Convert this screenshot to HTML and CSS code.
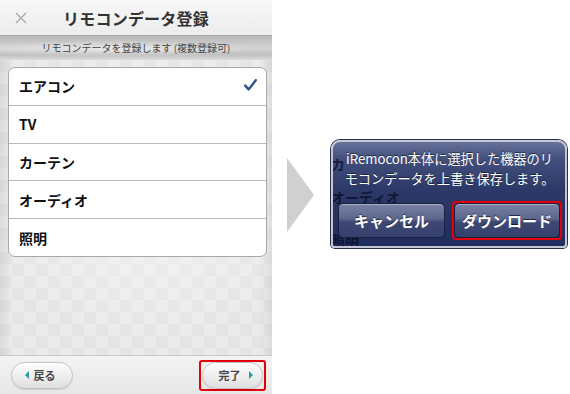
FILE: index.html
```html
<!DOCTYPE html>
<html lang="ja">
<head>
<meta charset="utf-8">
<link rel="stylesheet" href="styles.css">
</head>
<body>
<div class="page">
  <div class="phone">
    <div class="header">
      <div class="close">
        <svg width="12" height="12" viewBox="0 0 12 12"><path d="M1 1 L11 11 M11 1 L1 11" stroke="#a4a4a4" stroke-width="1.2" fill="none"/></svg>
      </div>
      <div class="title">リモコンデータ登録</div>
      <div></div>
    </div>
    <div class="subbar">リモコンデータを登録します (複数登録可)</div>
    <div class="content">
      <ul class="list">
        <li class="row">エアコン
          <svg class="check" width="13" height="12" viewBox="0 0 13 12"><path d="M1.2 6.6 L4.6 10.4 L11.8 1.2" stroke="#34548f" stroke-width="2.4" fill="none" stroke-linecap="round" stroke-linejoin="round"/></svg>
        </li>
        <li class="row">TV</li>
        <li class="row">カーテン</li>
        <li class="row">オーディオ</li>
        <li class="row">照明</li>
      </ul>
    </div>
    <div class="footer">
      <button class="pill back"><span class="tri tri-left"></span>戻る</button>
      <div class="redmark small">
        <button class="pill done">完了<span class="tri tri-right"></span></button>
      </div>
    </div>
  </div>
  <div class="arrow"></div>
  <div class="alert">
    <span class="ghost g1">カ</span>
    <span class="ghost g2">オーディオ</span>
    <span class="ghost g3">照明</span>
    <p class="msg">iRemocon本体に選択した機器のリ<br>モコンデータを上書き保存します。</p>
    <div class="alert-buttons">
      <button class="abtn cancel">キャンセル</button>
      <div class="redmark big">
        <button class="abtn">ダウンロード</button>
      </div>
    </div>
  </div>
</div>
</body>
</html>
```

FILE: styles.css
```css
* { box-sizing: border-box; }
html, body { margin: 0; padding: 0; background: #fff; }
body {
  font-family: "Noto Sans CJK JP", "Noto Sans", sans-serif;
  width: 570px;
  height: 394px;
  overflow: hidden;
}
.page {
  display: flex;
  align-items: flex-start;
  height: 394px;
}

/* phone screen */
.phone {
  width: 272px;
  height: 394px;
  display: flex;
  flex-direction: column;
  background: #e9e9e9;
}
.header {
  height: 36px;
  display: grid;
  grid-template-columns: 1fr auto 1fr;
  align-items: center;
  background: linear-gradient(#f8f8f8, #ececec);
  border-bottom: 1px solid #a9a9a9;
}
.close { padding-left: 15px; display: flex; align-items: center; padding-top: 1px; }
.title {
  font-size: 16px;
  font-weight: 700;
  color: #333;
  letter-spacing: 0.2px;
  padding-top: 1px;
}
.subbar {
  height: 24px;
  display: flex;
  align-items: center;
  justify-content: center;
  font-size: 10px;
  color: #444;
  background:
    radial-gradient(ellipse 55% 35% at 40% 55%, rgba(255,255,255,0.5), rgba(255,255,255,0) 100%),
    linear-gradient(#b7b7b7 0%, #cbcbcb 35%, #d3d3d3 55%, #c0c0c0 80%, #d6d6d6 100%);
  border-bottom: 1px solid #d9d9d9;
}
.content {
  flex: 1;
  padding: 7px 5px 0 8px;
  background:
    linear-gradient(90deg, rgba(0,0,0,0.07), rgba(0,0,0,0) 12px, rgba(0,0,0,0) 258px, rgba(0,0,0,0.06)),
    radial-gradient(ellipse 60% 50% at 55% 45%, rgba(255,255,255,0.5), rgba(255,255,255,0)),
    repeating-conic-gradient(#ebebeb 0 25%, #e5e5e5 0 50%) 0 0 / 24px 24px;
}
.list {
  list-style: none;
  margin: 0;
  padding: 0;
  height: 190px;
  background: #fff;
  border: 1px solid #a8a8a8;
  border-radius: 7px;
  display: flex;
  flex-direction: column;
  overflow: hidden;
}
.row {
  flex: 1;
  display: flex;
  align-items: center;
  justify-content: space-between;
  padding: 0 9px 0 10px;
  font-size: 14px;
  font-weight: 700;
  color: #111;
  border-bottom: 1px solid #b9b9b9;
}
.row:last-child { border-bottom: none; }
.check { margin-top: -2px; }

.footer {
  height: 39px;
  display: flex;
  align-items: center;
  justify-content: space-between;
  padding: 0 6px 0 11px;
  background: linear-gradient(#f3f3f3, #e7e7e7);
  border-top: 1px solid #c9c9c9;
}
.pill {
  height: 27px;
  border-radius: 14px;
  border: 1px solid #c2c2c2;
  background: linear-gradient(#fdfdfd, #ececec 60%, #dedede);
  box-shadow: 0 1px 1px rgba(0,0,0,0.12), inset 0 1px 0 #fff;
  font-family: inherit;
  font-size: 11px;
  font-weight: 700;
  color: #444;
  display: flex;
  align-items: center;
  justify-content: center;
  padding: 0;
}
.back { width: 62px; gap: 5px; padding-right: 4px; }
.done { width: 61px; gap: 8px; padding-left: 6px; }
.tri { width: 0; height: 0; border-top: 4px solid transparent; border-bottom: 4px solid transparent; }
.tri-left { border-right: 4px solid #2b9aa8; }
.tri-right { border-left: 4px solid #2b9aa8; }

.redmark {
  border: 2px solid #e4000b;
  border-radius: 3px;
}
.redmark.small { padding: 0 1px; height: 31px; display: flex; align-items: center; }

/* arrow */
.arrow {
  width: 27px;
  height: 74px;
  margin: 158px 0 0 15px;
  background: #d0d0d0;
  clip-path: polygon(0 0, 100% 50%, 0 100%);
}

/* alert */
.alert {
  position: relative;
  width: 236px;
  height: 108px;
  margin: 140px 0 0 17px;
  border: 2px solid #c3c7d3;
  border-radius: 9px 9px 4px 4px;
  overflow: hidden;
  background:
    linear-gradient(#67729a 0%, #43507d 16%, #2d3a69 45%, #263363 70%, #212d5c 100%);
  box-shadow: 0 0 0 1px #27304f;
  padding: 7px 3px 0 4px;
}
.ghost {
  position: absolute;
  left: -2px;
  font-size: 14px;
  font-weight: 700;
  color: rgba(6, 10, 32, 0.72);
}
.g1 { top: 12px; }
.g2 { top: 45px; }
.g3 { top: 88px; }
.msg {
  position: relative;
  margin: 0;
  text-align: center;
  color: #fff;
  font-size: 13.2px;
  line-height: 20px;
  text-shadow: 0 -1px 0 rgba(0,0,0,0.5);
}
.alert-buttons {
  position: relative;
  display: flex;
  align-items: center;
  justify-content: space-between;
  margin-top: 12px;
}
.abtn {
  width: 107px;
  height: 35px;
  border: 1px solid #18203d;
  border-radius: 5px;
  background: linear-gradient(#7a83a5 0%, #5c668c 45%, #3d4875 55%, #35406d 100%);
  box-shadow: inset 0 1px 0 rgba(255,255,255,0.35);
  color: #fff;
  font-family: inherit;
  font-size: 15px;
  font-weight: 700;
  text-shadow: 0 -1px 0 rgba(0,0,0,0.6);
  padding: 0;
}
.cancel { margin-left: 1px; }
.redmark.big { padding: 0; border-radius: 4px; }
.redmark.big .abtn { width: 106px; }
```
